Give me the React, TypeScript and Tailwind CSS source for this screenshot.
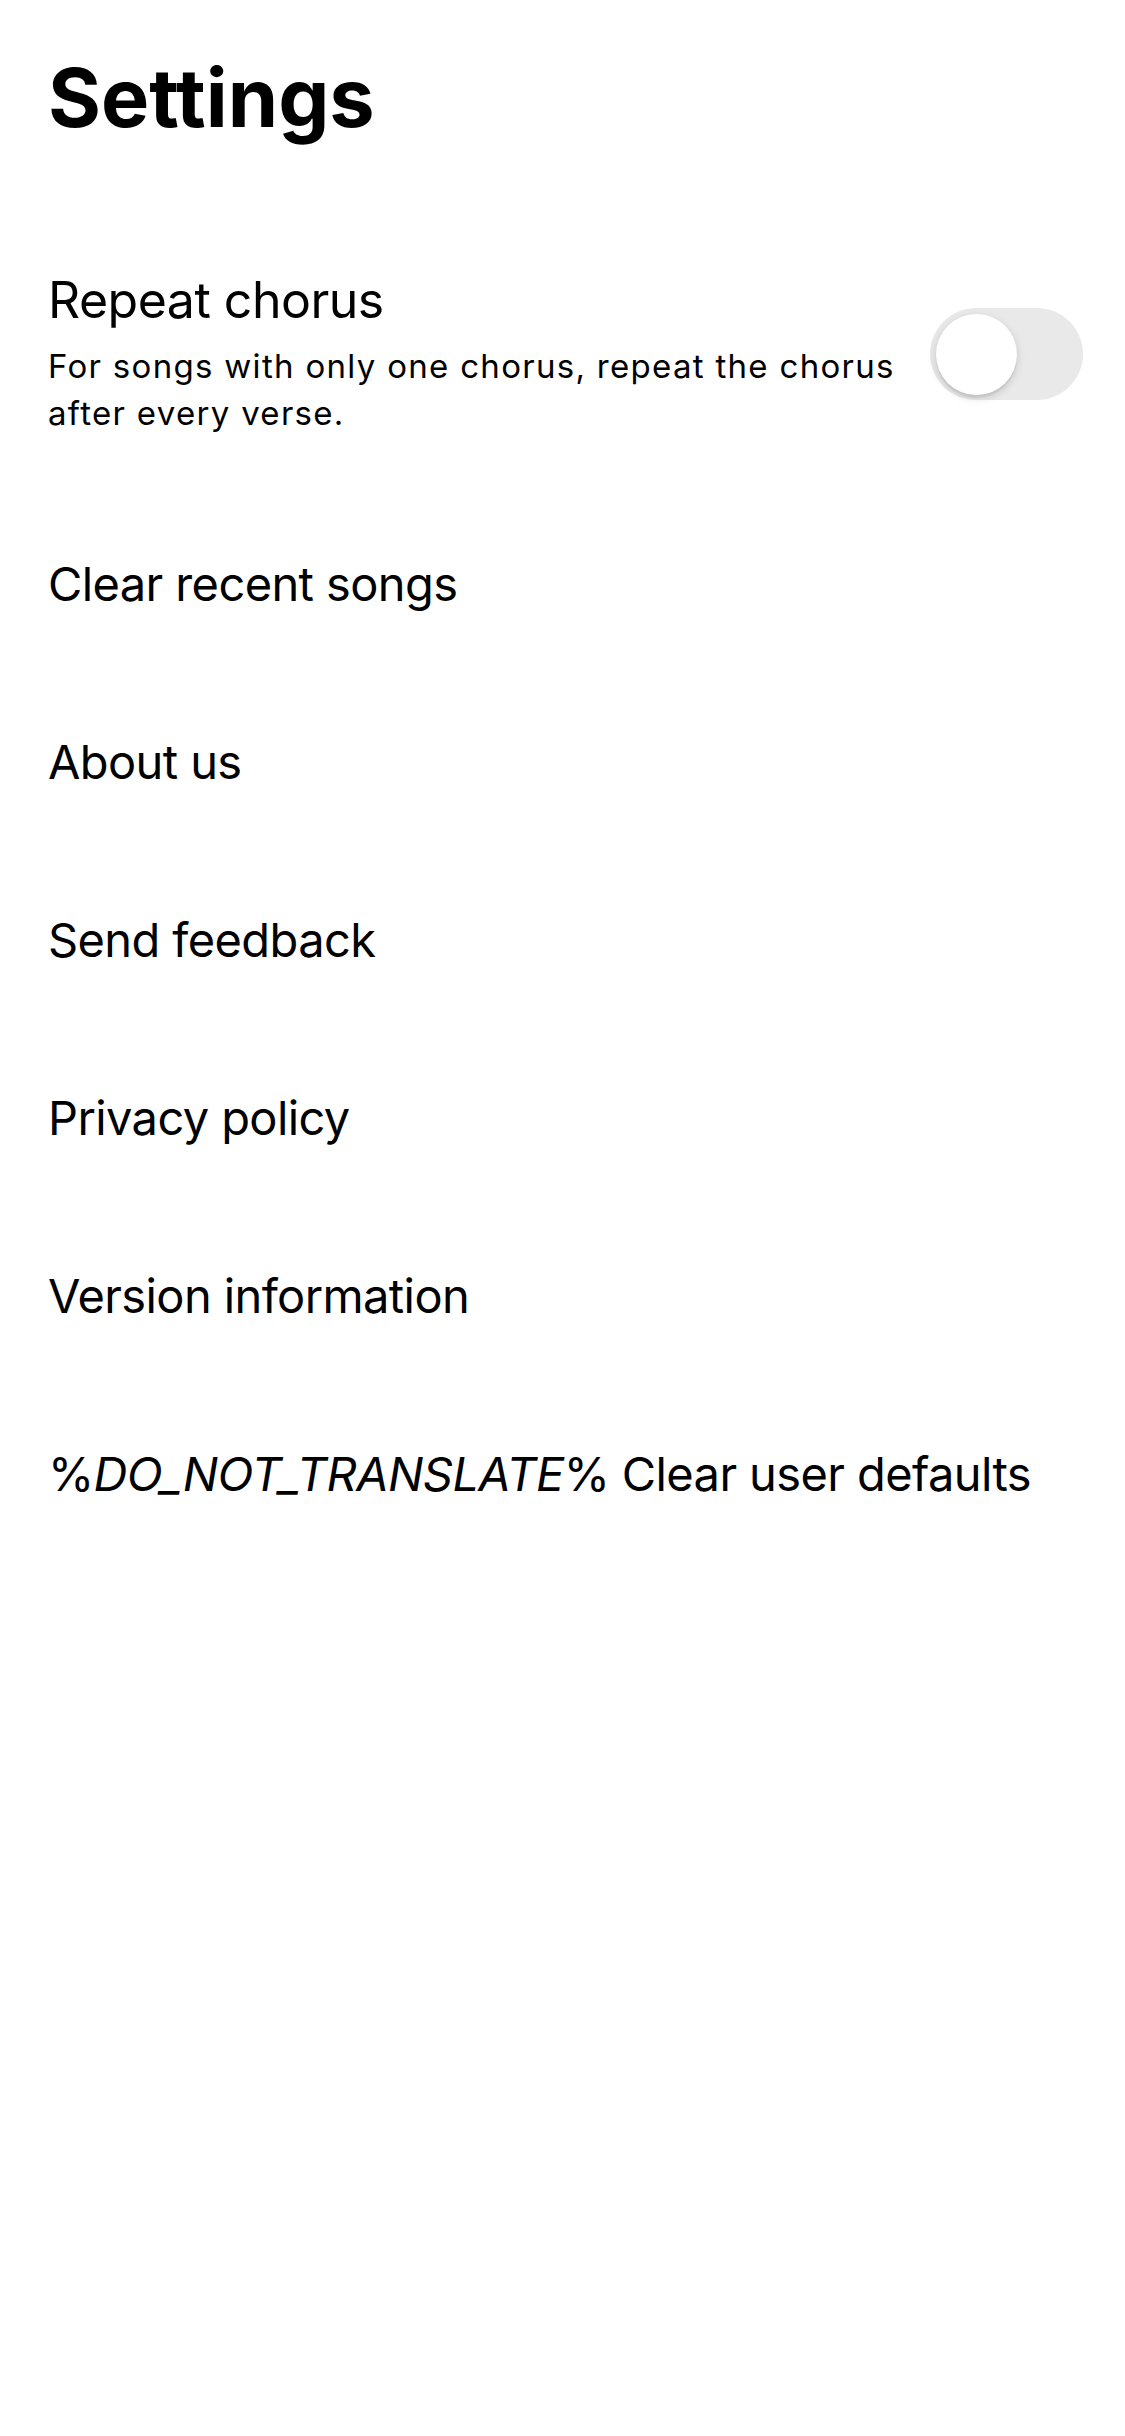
export default function App() {
  const items = [
    "Clear recent songs",
    "About us",
    "Send feedback",
    "Privacy policy",
    "Version information",
  ]

  return (
    <div className="min-h-screen bg-white text-black font-['Inter',sans-serif]">
      <header className="px-12 pt-[51px]">
        <h1 className="text-[81px] leading-[94px] font-bold">Settings</h1>
      </header>

      <main className="mt-[67px]">
        <div className="flex items-center gap-6 pl-12 pr-[42px] py-[58px]">
          <div className="flex-1">
            <div className="text-[50px] leading-[60px] tracking-[-0.5px] mb-[13px]">Repeat chorus</div>
            <div className="text-[33px] leading-[47px] tracking-[1.3px]">
              For songs with only one chorus, repeat the chorus after every verse.
            </div>
          </div>
          <div className="relative w-[153px] h-[92px] shrink-0 rounded-full bg-[#e9e9e9]">
            <div className="absolute left-[6px] top-[6px] w-[81px] h-[81px] rounded-full bg-white shadow-[0_3px_8px_rgba(0,0,0,0.15),0_3px_1px_rgba(0,0,0,0.06)]" />
          </div>
        </div>

        {items.map((label) => (
          <div key={label} className="flex items-center h-[178px] px-12 text-[47px] leading-[60px] tracking-[-0.6px]">
            {label}
          </div>
        ))}

        <div className="flex items-center h-[178px] px-12 text-[47px] leading-[60px] tracking-[-0.6px] whitespace-nowrap">
          <span>
            %<span className="italic">DO_NOT_TRANSLATE</span>% Clear user defaults
          </span>
        </div>
      </main>
    </div>
  )
}
